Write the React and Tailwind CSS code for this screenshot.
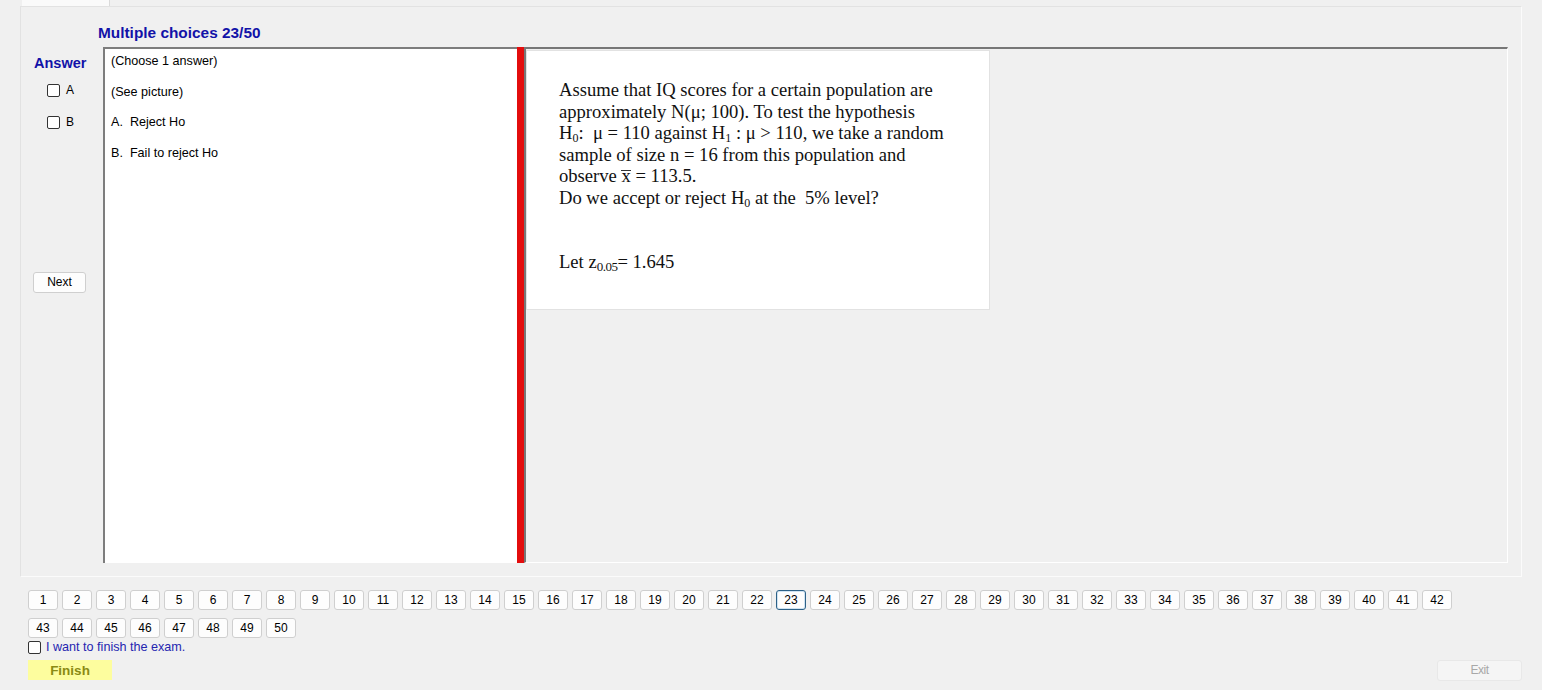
import React from "react";

const serif = "font-['Liberation_Serif','Times_New_Roman',serif]";

function Check({ className = "" }) {
  return (
    <span
      className={
        "inline-block w-[13px] h-[13px] bg-white border border-[#333333] rounded-[2px] " +
        className
      }
    />
  );
}

export default function App() {
  const nums = Array.from({ length: 50 }, (_, i) => i + 1);
  return (
    <div className="w-[1542px] h-[690px] bg-[#f0f0f0] overflow-hidden font-['Liberation_Sans',Arial,sans-serif] text-[12px] text-black">
      {/* tab strip */}
      <div className="h-[6px] flex">
        <div className="ml-[22px] w-[88px] h-[6px] bg-[#fafafa] border-r border-[#dadada]" />
      </div>

      {/* main panel */}
      <div className="ml-[20px] w-[1502px] h-[571px] border border-[#fbfbfb] border-t-[#e2e2e2] border-l-[#e2e2e2] flex flex-col">
        <div className="h-[40px] pt-[16px] pl-[77px] text-[15.4px] leading-[19px] font-bold text-[#1212a8]">
          Multiple choices 23/50
        </div>

        <div className="h-[516px] flex">
          {/* left column */}
          <div className="w-[82px] flex flex-col">
            <div className="mt-[8px] h-[16px] leading-[16px] pl-[13px] text-[14.5px] font-bold text-[#1212a8]">
              Answer
            </div>
            <div className="mt-[11px] h-[16px] flex items-center pl-[26px] gap-[6px]">
              <Check />
              <span className="leading-[16px]">A</span>
            </div>
            <div className="mt-[16px] h-[16px] flex items-center pl-[26px] gap-[6px]">
              <Check />
              <span className="leading-[16px]">B</span>
            </div>
            <button className="mt-[142px] ml-[12px] w-[53px] h-[21px] bg-[#fdfdfd] border border-[#cfcfcf] rounded-[3px] text-[12px] leading-[19px] text-center">
              Next
            </button>
          </div>

          {/* answers text box */}
          <div className="w-[414px] h-full bg-white border-t-2 border-l-2 border-[#7d7d7d] flex flex-col gap-[6.5px] pl-[6px] text-[12.6px]">
            <div className="h-[24px] leading-[24px]">(Choose 1 answer)</div>
            <div className="h-[24px] leading-[24px]">(See picture)</div>
            <div className="h-[24px] leading-[24px] whitespace-pre">A.  Reject Ho</div>
            <div className="h-[24px] leading-[24px] whitespace-pre">B.  Fail to reject Ho</div>
          </div>

          {/* splitter */}
          <div className="w-[7px] h-full bg-[#e30d0d]" />

          {/* picture area */}
          <div className="w-[984px] h-full border-t-2 border-l-2 border-[#777777] border-r border-r-white border-b border-b-white">
            <div className="mt-[1px] w-[464px] h-[260px] bg-white border border-[#e2e2e2] pl-[32px] pt-[28px]">
              <div className={serif + " text-[18.6px] leading-[21.5px] text-[#111] whitespace-pre"}>
                <div>Assume that IQ scores for a certain population are</div>
                <div>approximately N(μ; 100). To test the hypothesis</div>
                <div>
                  H<sub className="text-[12px]">0</sub>:  μ = 110 against H<sub className="text-[12px]">1</sub> : μ &gt; 110, we take a random
                </div>
                <div>sample of size n = 16 from this population and</div>
                <div>
                  observe <span className="inline-block leading-[9px] border-t border-[#333]">x</span> = 113.5.
                </div>
                <div>
                  Do we accept or reject H<sub className="text-[12px]">0</sub> at the  5% level?
                </div>
                <div>&nbsp;</div>
                <div>&nbsp;</div>
                <div>
                  Let z<sub className="text-[13px] tracking-[-0.5px]">0.05</sub>= 1.645
                </div>
              </div>
            </div>
          </div>
        </div>
      </div>

      {/* bottom area */}
      <div className="pt-[13px] pl-[28px] pr-[20px]">
        <div className="w-[1430px] flex flex-wrap gap-x-[4px] gap-y-[8px]">
          {nums.map((n) =>
            n === 23 ? (
              <div
                key={n}
                className="w-[30px] h-[20px] bg-[#fdfdfd] border border-[#2d6187] rounded-[3px] text-center leading-[18px] shadow-[inset_0_0_0_1px_#cfe3f2]"
              >
                {n}
              </div>
            ) : (
              <div
                key={n}
                className="w-[30px] h-[20px] bg-[#fdfdfd] border border-[#cfcfcf] rounded-[3px] text-center leading-[18px]"
              >
                {n}
              </div>
            )
          )}
        </div>
        <div className="mt-[1px] h-[16px] flex items-center gap-[5px]">
          <Check />
          <span className="text-[#2525b0] leading-[16px] text-[12.6px]">I want to finish the exam.</span>
        </div>
        <div className="mt-[5px] flex justify-between items-start">
          <div className="w-[84px] h-[20px] bg-[#fdfd9e] text-center text-[13.5px] font-bold leading-[21px] text-[#8a8a14]">
            Finish
          </div>
          <div className="w-[85px] h-[21px] bg-[#f5f5f5] border border-[#e8e8e8] rounded-[3px] text-center leading-[19px] text-[#a8a8a8] tracking-[-0.5px]">
            Exit
          </div>
        </div>
      </div>
    </div>
  );
}
